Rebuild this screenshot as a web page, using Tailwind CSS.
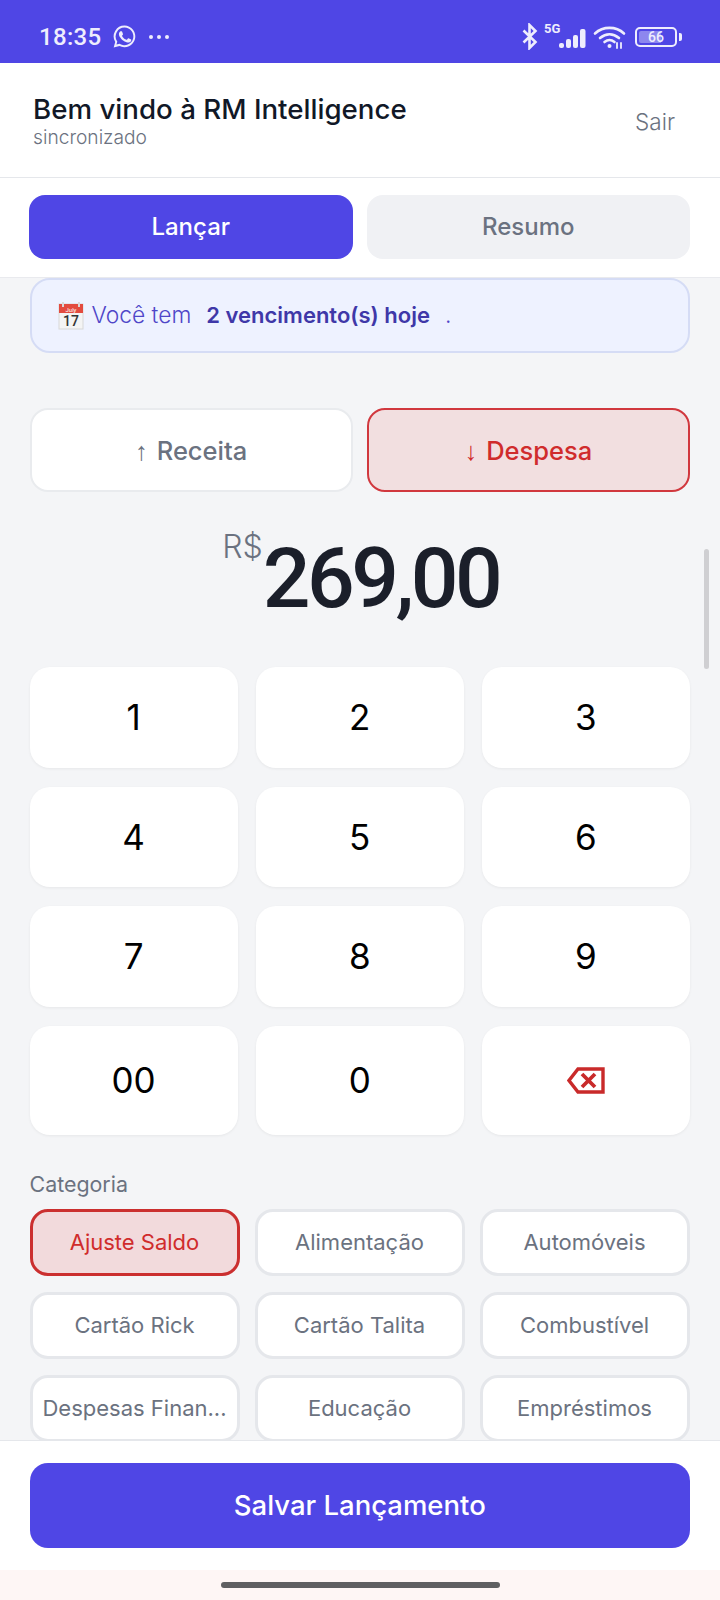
<!doctype html>
<html lang="pt-BR">
<head>
<meta charset="utf-8">
<script src="https://cdn.jsdelivr.net/npm/@tailwindcss/browser@4"></script>
</head>
<body class="m-0">
<div class="relative flex h-[1600px] w-[720px] flex-col overflow-hidden bg-[#f4f5f7] font-['Inter',sans-serif]">
  <!-- status bar -->
  <div class="flex h-[63px] shrink-0 items-center justify-between bg-[#4f46e5] pl-[39px] pr-[38px] pt-[10px] font-['Roboto',sans-serif] text-[#eeedfd]">
    <div class="flex items-center">
      <span class="text-[24px] font-medium tracking-[0.3px]">18:35</span>
      <svg class="ml-[11px]" width="25" height="25" viewBox="0 0 24 24" fill="currentColor"><path d="M12.04 1.5A10.4 10.4 0 0 0 3.1 17.2L1.6 22.6l5.6-1.45A10.4 10.4 0 1 0 12.04 1.5zm0 1.9a8.5 8.5 0 1 1-4.4 15.8l-.35-.2-3 .78.8-2.92-.23-.37A8.5 8.5 0 0 1 12.04 3.4zM8.4 7c-.2 0-.5.07-.77.36-.26.29-1 .98-1 2.4 0 1.41 1.03 2.78 1.17 2.97.15.19 2 3.2 5 4.36 2.47.97 2.97.78 3.5.73.54-.05 1.73-.7 1.98-1.39.24-.68.24-1.27.17-1.39-.07-.12-.27-.2-.56-.34-.3-.15-1.73-.86-2-.96-.27-.1-.46-.14-.66.15-.2.3-.75.95-.92 1.15-.17.19-.34.22-.63.07-.3-.15-1.25-.46-2.38-1.47-.88-.78-1.47-1.75-1.65-2.05-.17-.29-.02-.45.13-.6.13-.13.3-.34.44-.51.15-.17.2-.3.3-.49.1-.2.05-.37-.03-.51-.07-.15-.64-1.6-.9-2.18C9.36 7.05 9.1 7.03 8.9 7.02z"/></svg>
      <span class="ml-[12px] flex gap-[4px]"><i class="h-[4px] w-[4px] rounded-full bg-current"></i><i class="h-[4px] w-[4px] rounded-full bg-current"></i><i class="h-[4px] w-[4px] rounded-full bg-current"></i></span>
    </div>
    <div class="flex items-center">
      <svg width="16" height="27" viewBox="0 0 16 27" fill="none" stroke="currentColor" stroke-width="2.6"><path d="M1.5 7.5 13.5 19 7.5 25V2l6 6L1.5 19.500"/></svg>
      <div class="relative ml-[6px] h-[24px] w-[45px]">
        <span class="absolute left-0 top-[-3px] text-[13px] font-bold leading-[14px]">5G</span>
        <svg class="absolute bottom-0 left-[15px]" width="30" height="21" viewBox="0 0 30 21" fill="currentColor"><rect x="0" y="15" width="5" height="5" rx="2"/><rect x="7" y="11" width="5" height="9" rx="2"/><rect x="14" y="7" width="5" height="13" rx="2"/><rect x="21" y="1" width="5.500" height="19" rx="2"/></svg>
      </div>
      <svg class="ml-[4px]" width="33" height="24" viewBox="0 0 33 24" fill="none" stroke="currentColor" stroke-width="2.600" stroke-linecap="round"><path d="M2 8.500C10 1 23 1 31 8.500"/><path d="M7 13c6-5 13-5 19 0"/><path d="M11.500 17c3.500-2.800 6.500-2.800 10 0"/><circle cx="16.500" cy="21" r="2" fill="currentColor" stroke="none"/><path d="M24 18v5M28 18v5" stroke-width="1.800"/></svg>
      <div class="relative ml-[9px] flex h-[20px] w-[42px] items-center rounded-[5px] border-[2px] border-current p-[2px]">
        <div class="h-full w-[66%] rounded-l-[2px] bg-[#8d87ee]"></div>
        <span class="absolute inset-0 flex items-center justify-center text-[14px] font-medium leading-none">66</span>
      </div>
      <div class="ml-[2px] h-[8px] w-[3px] rounded-r-[2px] bg-current"></div>
    </div>
  </div>

  <!-- header -->
  <div class="flex h-[115px] shrink-0 items-center justify-between border-b border-[#e5e7eb] bg-white pl-[33px] pr-[45px]">
    <div>
      <div class="text-[27.700px] font-medium leading-[33px] text-[#111827]">Bem vindo à RM Intelligence</div>
      <div class="text-[19.200px] font-light leading-[22px] text-[#6b7280]">sincronizado</div>
    </div>
    <div class="mt-[3px] text-[22.500px] font-light text-[#6b7280]">Sair</div>
  </div>

  <!-- tabs -->
  <div class="flex h-[100px] shrink-0 items-center gap-[14px] border-b border-[#e9eaee] bg-white pb-[2px] pl-[29px] pr-[30px] text-[24px] font-medium">
    <div class="flex h-[64px] flex-1 items-center justify-center rounded-[16px] bg-[#4f46e5] text-white">Lançar</div>
    <div class="flex h-[64px] flex-1 items-center justify-center rounded-[16px] bg-[#f0f1f4] text-[#6b7280]">Resumo</div>
  </div>

  <!-- scrollable content -->
  <div class="relative min-h-0 flex-1 overflow-hidden pl-[29.500px] pr-[30px]">
    <div class="flex h-[75px] items-center rounded-[20px] border-2 border-[#d5dcf5] bg-[#eef2ff] pl-[26px] text-[22.800px] text-[#4f46c8]">
      <svg width="26" height="28" viewBox="0 0 26 28" class="mr-[8px] shrink-0"><rect x="1" y="2" width="24" height="25" fill="#f4f4f4" stroke="#d8d8d8"/><rect x="1" y="2" width="24" height="9" fill="#e34b3f"/><rect x="4" y="0" width="2" height="5" fill="#d8d8d8"/><rect x="20" y="0" width="2" height="5" fill="#d8d8d8"/><text x="13" y="9.500" font-size="6" text-anchor="middle" fill="#fff" font-family="Roboto">July</text><text x="13" y="24" font-size="14" font-weight="500" text-anchor="middle" fill="#333" font-family="Roboto">17</text></svg>
      <span class="font-light">Você tem</span>
      <span class="ml-[15px] text-[22px] font-semibold text-[#3f38a8]">2 vencimento(s) hoje</span>
      <span class="ml-[15px] font-light">.</span>
    </div>

    <div class="mt-[55px] flex gap-[14px] text-[25.500px] font-medium">
      <div class="flex h-[84px] flex-1 items-center justify-center rounded-[18px] border-2 border-[#e9ebee] bg-white pt-[2px] text-[#6b7280]"><span class="mr-[9px] font-['Roboto',sans-serif] font-normal">↑</span>Receita</div>
      <div class="flex h-[84px] flex-1 items-center justify-center rounded-[18px] border-2 border-[#d1383e] bg-[#f2dfe0] pt-[2px] text-[#d02c2c]"><span class="mr-[9px] font-['Roboto',sans-serif] font-normal">↓</span>Despesa</div>
    </div>

    <div class="mt-[34px] flex h-[140px] items-start justify-center pl-[2px]">
      <span class="mt-[-3px] text-[32px] font-light leading-[48px] text-[#6b7280]">R$</span>
      <span class="mt-[4px] font-['Roboto',sans-serif] text-[84px] font-medium leading-[98px] tracking-[-3.500px] text-[#1b1f2a]">269,00</span>
    </div>

    <div class="mt-[1px] grid grid-cols-3 gap-x-[18px] gap-y-[19px] text-[35px] text-black">
      <div class="flex h-[100.500px] items-center justify-center rounded-[20px] bg-white shadow-[0_1px_3px_rgba(0,0,0,0.06)]">1</div>
      <div class="flex h-[100.500px] items-center justify-center rounded-[20px] bg-white shadow-[0_1px_3px_rgba(0,0,0,0.06)]">2</div>
      <div class="flex h-[100.500px] items-center justify-center rounded-[20px] bg-white shadow-[0_1px_3px_rgba(0,0,0,0.06)]">3</div>
      <div class="flex h-[100.500px] items-center justify-center rounded-[20px] bg-white shadow-[0_1px_3px_rgba(0,0,0,0.06)]">4</div>
      <div class="flex h-[100.500px] items-center justify-center rounded-[20px] bg-white shadow-[0_1px_3px_rgba(0,0,0,0.06)]">5</div>
      <div class="flex h-[100.500px] items-center justify-center rounded-[20px] bg-white shadow-[0_1px_3px_rgba(0,0,0,0.06)]">6</div>
      <div class="flex h-[100.500px] items-center justify-center rounded-[20px] bg-white shadow-[0_1px_3px_rgba(0,0,0,0.06)]">7</div>
      <div class="flex h-[100.500px] items-center justify-center rounded-[20px] bg-white shadow-[0_1px_3px_rgba(0,0,0,0.06)]">8</div>
      <div class="flex h-[100.500px] items-center justify-center rounded-[20px] bg-white shadow-[0_1px_3px_rgba(0,0,0,0.06)]">9</div>
      <div class="flex h-[109px] items-center justify-center rounded-[20px] bg-white shadow-[0_1px_3px_rgba(0,0,0,0.06)]">00</div>
      <div class="flex h-[109px] items-center justify-center rounded-[20px] bg-white shadow-[0_1px_3px_rgba(0,0,0,0.06)]">0</div>
      <div class="flex h-[109px] items-center justify-center rounded-[20px] bg-white shadow-[0_1px_3px_rgba(0,0,0,0.06)]">
        <svg width="38" height="27" viewBox="0 0 38 27" fill="none" stroke="#c92a2a" stroke-width="3.400"><path d="M36 2H11L2 13.500 11 25h25z"/><path d="M15 7l13 13M28 7 15 20" stroke-width="3.800"/></svg>
      </div>
    </div>

    <div class="mt-[37px] text-[21.400px] leading-[24px] text-[#6b7280]">Categoria</div>
    <div class="mt-[13px] grid grid-cols-[210px_210px_210px] gap-x-[15px] gap-y-[16px] text-[22px] text-[#6b7280]">
      <div class="flex h-[67px] items-center justify-center rounded-[18px] border-[3px] border-[#cb2f2f] bg-[#f2dadc] text-[#d02c2c]">Ajuste Saldo</div>
      <div class="flex h-[67px] items-center justify-center rounded-[18px] border-[3px] border-[#e5e7eb] bg-white">Alimentação</div>
      <div class="flex h-[67px] items-center justify-center rounded-[18px] border-[3px] border-[#e5e7eb] bg-white">Automóveis</div>
      <div class="flex h-[67px] items-center justify-center rounded-[18px] border-[3px] border-[#e5e7eb] bg-white">Cartão Rick</div>
      <div class="flex h-[67px] items-center justify-center rounded-[18px] border-[3px] border-[#e5e7eb] bg-white">Cartão Talita</div>
      <div class="flex h-[67px] items-center justify-center rounded-[18px] border-[3px] border-[#e5e7eb] bg-white">Combustível</div>
      <div class="flex h-[67px] items-center justify-center rounded-[18px] border-[3px] border-[#e5e7eb] bg-white">Despesas Finan...</div>
      <div class="flex h-[67px] items-center justify-center rounded-[18px] border-[3px] border-[#e5e7eb] bg-white">Educação</div>
      <div class="flex h-[67px] items-center justify-center rounded-[18px] border-[3px] border-[#e5e7eb] bg-white">Empréstimos</div>
    </div>
    <div class="absolute right-[11px] top-[271px] h-[120px] w-[5px] rounded-full bg-[#cfcfd2]"></div>
  </div>

  <!-- save -->
  <div class="flex h-[130px] shrink-0 items-start border-t border-[#e5e7eb] bg-white pl-[29.500px] pr-[30px] pt-[22px]">
    <div class="flex h-[85px] w-full items-center justify-center rounded-[18px] bg-[#4f46e5] text-[27.500px] font-medium text-white">Salvar Lançamento</div>
  </div>

  <!-- gesture bar -->
  <div class="flex h-[30px] shrink-0 items-start justify-center bg-[#fef6f5] pt-[12px]">
    <div class="h-[6px] w-[279px] rounded-full bg-[#5f5f61]"></div>
  </div>
</div>
</body>
</html>
